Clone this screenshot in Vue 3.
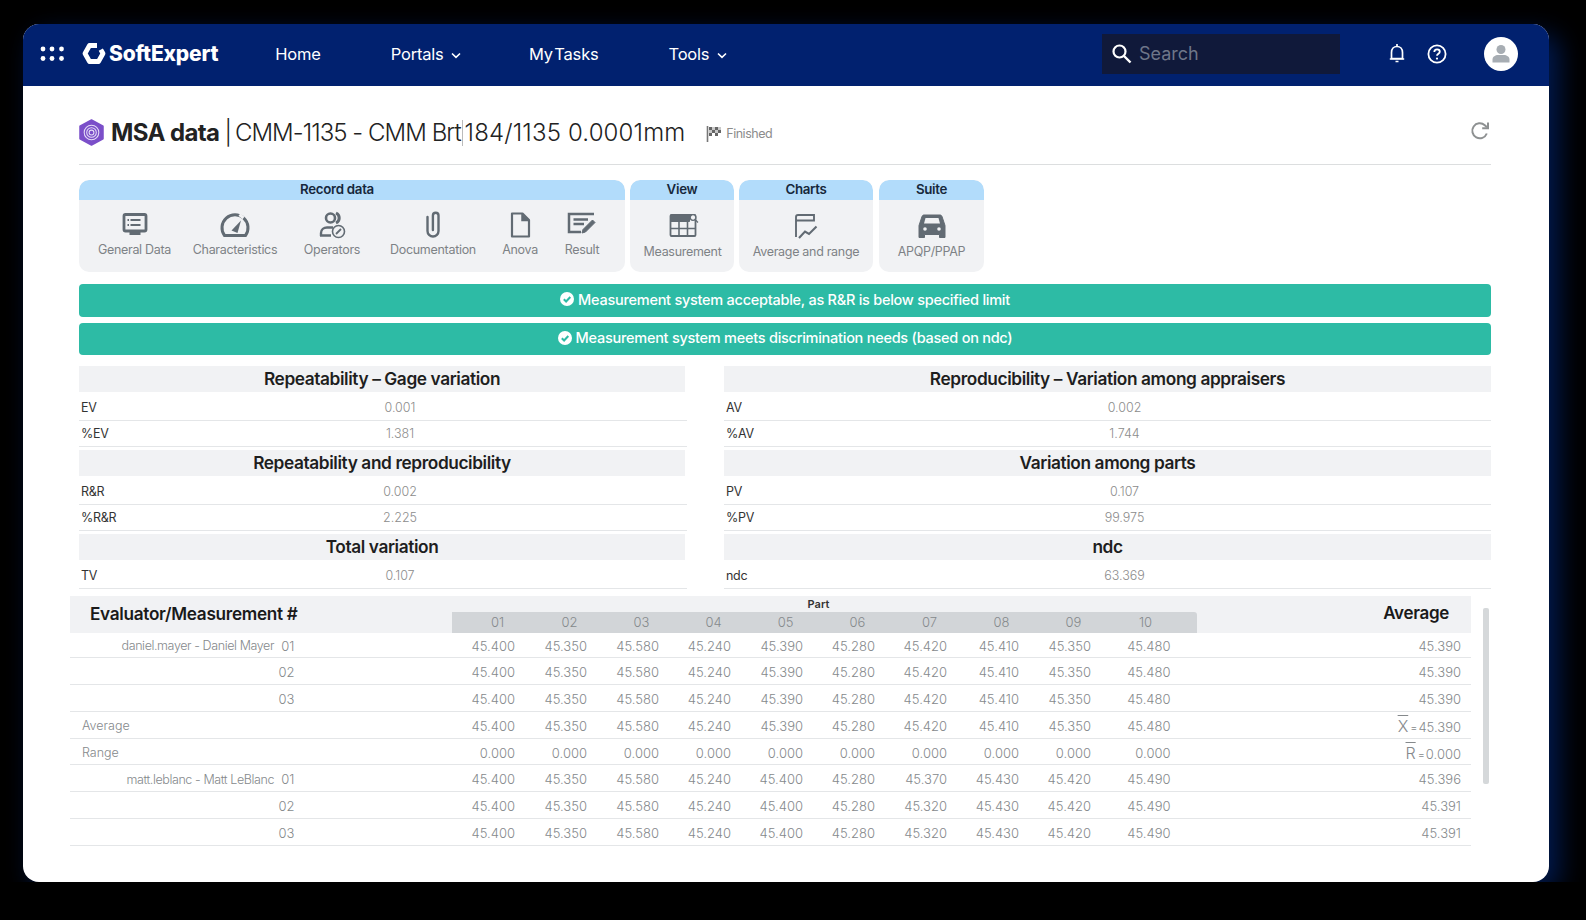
<script setup>
const groups = [
  {
    title: 'Record data',
    cls: 'record',
    items: [
      { label: 'General Data', icon: 'monitor' },
      { label: 'Characteristics', icon: 'gauge' },
      { label: 'Operators', icon: 'users' },
      { label: 'Documentation', icon: 'clip' },
      { label: 'Anova', icon: 'file' },
      { label: 'Result', icon: 'result' },
    ],
  },
  { title: 'View', cls: 'view', items: [{ label: 'Measurement', icon: 'table' }] },
  { title: 'Charts', cls: 'charts', items: [{ label: 'Average and range', icon: 'chart' }] },
  { title: 'Suite', cls: 'suite', items: [{ label: 'APQP/PPAP', icon: 'car' }] },
]

const leftStats = [
  { title: 'Repeatability – Gage variation', rows: [['EV', '0.001'], ['%EV', '1.381']] },
  { title: 'Repeatability and reproducibility', rows: [['R&R', '0.002'], ['%R&R', '2.225']] },
  { title: 'Total variation', rows: [['TV', '0.107']] },
]
const rightStats = [
  { title: 'Reproducibility – Variation among appraisers', rows: [['AV', '0.002'], ['%AV', '1.744']] },
  { title: 'Variation among parts', rows: [['PV', '0.107'], ['%PV', '99.975']] },
  { title: 'ndc', rows: [['ndc', '63.369']] },
]

const parts = ['01', '02', '03', '04', '05', '06', '07', '08', '09', '10']
const danielVals = ['45.400', '45.350', '45.580', '45.240', '45.390', '45.280', '45.420', '45.410', '45.350', '45.480']
const zeroVals = parts.map(() => '0.000')
const mattA = ['45.400', '45.350', '45.580', '45.240', '45.400', '45.280', '45.370', '45.430', '45.420', '45.490']
const mattB = ['45.400', '45.350', '45.580', '45.240', '45.400', '45.280', '45.320', '45.430', '45.420', '45.490']

const rows = [
  { who: 'daniel.mayer - Daniel Mayer', num: '01', vals: danielVals, avg: '45.390' },
  { who: '', num: '02', vals: danielVals, avg: '45.390' },
  { who: '', num: '03', vals: danielVals, avg: '45.390' },
  { label: 'Average', vals: danielVals, avg: '45.390', sym: 'X' },
  { label: 'Range', vals: zeroVals, avg: '0.000', sym: 'R' },
  { who: 'matt.leblanc - Matt LeBlanc', num: '01', vals: mattA, avg: '45.396' },
  { who: '', num: '02', vals: mattB, avg: '45.391' },
  { who: '', num: '03', vals: mattB, avg: '45.391' },
]
</script>

<template>
  <div class="window">
    <header class="topbar">
      <svg class="apps" width="24" height="15" viewBox="0 0 24 15" fill="#fff">
        <circle cx="3" cy="3" r="2.4" /><circle cx="12" cy="3" r="2.4" /><circle cx="21.5" cy="3" r="2.4" />
        <circle cx="3" cy="12.5" r="2.4" /><circle cx="12" cy="12.5" r="2.4" /><circle cx="21.5" cy="12.5" r="2.4" />
      </svg>
      <div class="brand">
        <svg width="24" height="23" viewBox="0 0 24 23">
          <path d="M15 3.500H7.500L3 11.500 7.500 19.500H16.500L21 11.500 18.800 7.600" fill="none" stroke="#fff" stroke-width="4.800" stroke-linejoin="round" />
        </svg>
        <span>SoftExpert</span>
      </div>
      <nav class="nav">
        <a class="home">Home</a>
        <a class="portals">Portals
          <svg width="10" height="7" viewBox="0 0 10 7"><path d="M1 1.500 5 5.300 9 1.500" fill="none" stroke="#fff" stroke-width="1.600" /></svg>
        </a>
        <a class="tasks">My Tasks</a>
        <a class="tools">Tools
          <svg width="10" height="7" viewBox="0 0 10 7"><path d="M1 1.500 5 5.300 9 1.500" fill="none" stroke="#fff" stroke-width="1.600" /></svg>
        </a>
      </nav>
      <div class="search">
        <svg width="21" height="21" viewBox="0 0 21 21"><circle cx="8.500" cy="8.500" r="6" fill="none" stroke="#fff" stroke-width="2.200" /><path d="m13 13 6.500 6.500" stroke="#fff" stroke-width="2.400" /></svg>
        <span>Search</span>
      </div>
      <svg class="bell" width="18" height="21" viewBox="0 0 18 21" fill="none" stroke="#fff" stroke-width="1.700">
        <path d="M3.500 15.500V9.500C3.500 6 5.800 3.500 9 3.500s5.500 2.500 5.500 6v6z" /><path d="M1.800 16h14.400M9 1v2.500M7.500 18.500h3" />
      </svg>
      <svg class="help" width="20" height="20" viewBox="0 0 20 20" fill="none" stroke="#fff" stroke-width="1.800">
        <circle cx="10" cy="10" r="8.600" /><path d="M7.300 8c0-1.700 1.200-2.700 2.800-2.700s2.700 1 2.700 2.400c0 2-2.800 2.100-2.800 4.100" />
        <circle cx="10" cy="14.600" r="1.100" fill="#fff" stroke="none" />
      </svg>
      <div class="avatar">
        <svg width="20" height="19" viewBox="0 0 20 19" fill="#a7adb3"><circle cx="10" cy="5.500" r="4.500" /><path d="M1.500 18.500v-3c0-3 3-4.500 5.500-4.500h6c2.500 0 5.500 1.500 5.500 4.500v3z" /></svg>
      </div>
    </header>

    <main class="content">
      <div class="title-row">
        <svg class="title-icon" width="25" height="27" viewBox="0 0 26 28">
          <path d="M13 1 25 7.500v13L13 27 1 20.500v-13z" fill="#7b4fc9" stroke="#7b4fc9" stroke-width="1.500" stroke-linejoin="round" />
          <g fill="none" stroke="#e5dcf6" stroke-width="1.100"><circle cx="13" cy="14" r="7.600" /><circle cx="13" cy="14" r="5" /><circle cx="13" cy="14" r="2.500" /></g>
        </svg>
        <h1><b>MSA data</b><span class="bar">|</span><span class="code">CMM-1135 - CMM Brt</span><i class="caret"></i><span class="spec">184/1135 0.0001mm</span></h1>
        <span class="status">
          <svg width="16" height="18" viewBox="0 0 16 18">
            <path d="M1.500 1v16" stroke="#777" stroke-width="1.600" />
            <path d="M3 2h3v3H3zM9 2h3v3H9zM6 5h3v3H6zM12 5h3v3h-3zM3 8h3v3H3zM9 8h3v3H9z" fill="#666" />
            <path d="M6 2h3v3H6zM12 2h3v3h-3zM3 5h3v3H3zM9 5h3v3H9z" fill="#c9c9c9" />
          </svg>
          Finished
        </span>
        <svg class="refresh" width="20" height="20" viewBox="0 0 20 20" fill="none" stroke="#8e9192" stroke-width="2">
          <path d="M16.800 12.500A7.500 7.500 0 1 1 14.800 4.200L17 6.300" /><path d="M18 1.500v5.800h-5.800" />
        </svg>
      </div>

      <section class="toolbar">
        <div v-for="g in groups" :key="g.title" class="group" :class="g.cls">
          <div class="group-head">{{ g.title }}</div>
          <div class="group-body">
            <div v-for="it in g.items" :key="it.label" class="tool">
              <svg width="30" height="28" viewBox="0 0 30 28" fill="none" stroke="#626b73" stroke-width="2.200">
                <template v-if="it.icon === 'monitor'">
                  <rect x="4" y="3.500" width="22" height="16.500" rx="1.500" stroke-width="2.800" />
                  <path d="M10.500 9h10M10.500 14h10M7.500 9h1.500M7.500 14h1.500" stroke-width="1.800" />
                  <path d="M9.500 22.500h11" stroke-width="3" />
                </template>
                <template v-else-if="it.icon === 'gauge'">
                  <path d="M4.500 24.500h21a13 13 0 1 0-21 0z" stroke-width="3" stroke-linejoin="round" />
                  <path d="M19.500 3.500l4 3.500" stroke="#f1f2f4" stroke-width="3" />
                  <path d="m11.500 19.500 9.500-10-3.500 12.500z" fill="#626b73" stroke="none" />
                </template>
                <template v-else-if="it.icon === 'users'">
                  <circle cx="13.500" cy="7" r="4.500" stroke-width="2.600" />
                  <path d="M19 2a5.500 5.500 0 0 1 0 10" stroke-width="3" />
                  <path d="M4 25v-3c0-3.500 3-5.500 6-5.500h6" stroke-width="2.400" />
                  <path d="M3 24.500h11" stroke-width="2.400" />
                  <circle cx="21.500" cy="20.500" r="6" stroke-width="1.600" />
                  <path d="m19 23 5-5" stroke-width="1.800" />
                </template>
                <template v-else-if="it.icon === 'clip'">
                  <path d="M9.500 6v14a5.500 5.500 0 0 0 11 0V4.500a2.800 2.800 0 0 0-5.600 0V19" stroke-width="2.400" stroke-linecap="round" />
                </template>
                <template v-else-if="it.icon === 'file'">
                  <path d="M7 2.500h10.500L24 9v16.500H7z" stroke-linejoin="round" />
                  <path d="M17 3v6.500h7" fill="#626b73" stroke-width="1.500" />
                </template>
                <template v-else-if="it.icon === 'result'">
                  <path d="M27 3H2v18h12" stroke-width="2.500" />
                  <path d="M6.500 8.500H21M6.500 13H17" stroke-width="2.500" />
                  <path d="m15 22 1-3.500 9.500-9.500 2.500 2.500-9.500 9.500z" fill="#626b73" stroke-width="1" />
                </template>
                <template v-else-if="it.icon === 'table'">
                  <rect x="1.500" y="3" width="25" height="21" rx="1" stroke-width="1.800" />
                  <path d="M1.500 3h19v6.500h-19z" fill="#626b73" stroke-width="1" />
                  <path d="M1.500 16.500h25M10 9v15M18.500 9v15" stroke-width="1.600" />
                  <circle cx="24" cy="5.500" r="2.800" fill="#f1f2f4" stroke-width="1.300" />
                  <path d="m26 7.500 3 3" stroke-width="1.300" />
                </template>
                <template v-else-if="it.icon === 'chart'">
                  <path d="M5 25V5a2 2 0 0 1 2-2h16v5.500H5" stroke-width="1.900" />
                  <path d="m8 26 6-6.500 4 2.500 7.500-7.500" stroke-width="2.100" />
                </template>
                <template v-else>
                  <path d="M2 13.500 5 4.500c.4-1 1-1.500 2-1.500h16c1 0 1.600.5 2 1.500l3 9v12h-5.500v-3h-15v3H2z" fill="#626b73" stroke-width="1" />
                  <path d="M7 11.500 8.500 6h13l1.500 5.500z" fill="#f1f2f4" stroke="none" />
                  <circle cx="8" cy="17" r="1.800" fill="#f1f2f4" stroke="none" /><circle cx="22" cy="17" r="1.800" fill="#f1f2f4" stroke="none" />
                </template>
              </svg>
              <span>{{ it.label }}</span>
            </div>
          </div>
        </div>
      </section>

      <div class="banner first">
        <svg width="14" height="14" viewBox="0 0 14 14"><circle cx="7" cy="7" r="7" fill="#fff" /><path d="m3.800 7.200 2.300 2.300 4.200-4.500" fill="none" stroke="#2dbba5" stroke-width="2" /></svg>
        Measurement system acceptable, as R&amp;R is below specified limit
      </div>
      <div class="banner second">
        <svg width="14" height="14" viewBox="0 0 14 14"><circle cx="7" cy="7" r="7" fill="#fff" /><path d="m3.800 7.200 2.300 2.300 4.200-4.500" fill="none" stroke="#2dbba5" stroke-width="2" /></svg>
        Measurement system meets discrimination needs (based on ndc)
      </div>

      <section class="stats">
        <div class="stat-col left">
          <div v-for="s in leftStats" :key="s.title" class="stat-block">
            <h3>{{ s.title }}</h3>
            <div v-for="r in s.rows" :key="r[0]" class="stat-row"><span class="k">{{ r[0] }}</span><span class="v">{{ r[1] }}</span></div>
          </div>
        </div>
        <div class="stat-col right">
          <div v-for="s in rightStats" :key="s.title" class="stat-block">
            <h3>{{ s.title }}</h3>
            <div v-for="r in s.rows" :key="r[0]" class="stat-row"><span class="k">{{ r[0] }}</span><span class="v">{{ r[1] }}</span></div>
          </div>
        </div>
      </section>

      <section class="grid-wrap">
        <div class="data">
          <div class="data-head">
            <div class="dh-title">Evaluator/Measurement #</div>
            <div class="dh-parts">
              <div class="dh-part">Part</div>
              <div class="dh-band"><span v-for="p in parts" :key="p">{{ p }}</span></div>
            </div>
            <div class="dh-avg">Average</div>
          </div>
          <div v-for="(r, i) in rows" :key="i" class="data-row">
            <div class="who-cell">
              <template v-if="r.label"><span class="row-label">{{ r.label }}</span></template>
              <template v-else><span class="who">{{ r.who }}</span><span class="num">{{ r.num }}</span></template>
            </div>
            <span v-for="(v, j) in r.vals" :key="j" class="val">{{ v }}</span>
            <div class="avg">
              <template v-if="r.sym"><span class="sym">{{ r.sym }}</span><span class="eq">=</span></template>{{ r.avg }}
            </div>
          </div>
        </div>
        <div class="scrollbar"></div>
      </section>
    </main>
  </div>
</template>

<style>
html, body { margin: 0; background: #000; }
</style>

<style scoped>
.window {
  width: 1526px;
  height: 858px;
  margin: 24px 0 0 23px;
  background: #fff;
  border-radius: 16px;
  overflow: hidden;
  box-shadow: 10px 10px 26px #001a50;
  font-family: Inter, "Liberation Sans", sans-serif;
  color: #222;
  display: flex;
  flex-direction: column;
}
.topbar {
  height: 62px;
  flex: none;
  box-sizing: border-box;
  background: #01216f;
  display: flex;
  align-items: center;
  color: #fff;
  padding: 0 0 3px 17px;
}
.brand {
  display: flex;
  align-items: center;
  gap: 3px;
  margin-left: 18px;
  font-size: 21px;
  font-weight: 800;
  letter-spacing: -0.2px;
}
.nav {
  display: flex;
  align-items: center;
  margin-left: 57px;
  font-size: 16.500px;
  letter-spacing: -0.2px;
}
.nav a svg { margin-left: 3px; vertical-align: 1px; }
.portals { margin-left: 70px; }
.tasks { margin-left: 68px; word-spacing: -3px; }
.tools { margin-left: 70px; }
.search {
  margin-left: auto;
  width: 238px;
  height: 40px;
  background: #10193a;
  display: flex;
  align-items: center;
  gap: 7px;
  padding-left: 9px;
  box-sizing: border-box;
  font-size: 18px;
  color: #6e7689;
}
.bell { margin-left: 48px; }
.help { margin-left: 21px; }
.avatar {
  width: 34px;
  height: 34px;
  border-radius: 50%;
  background: #fff;
  margin-left: 37px;
  margin-right: 31px;
  display: flex;
  align-items: center;
  justify-content: center;
}

.content { padding: 0 58px 0 56px; }
.title-row {
  height: 79px;
  box-sizing: border-box;
  border-bottom: 1px solid #dcdedf;
  display: flex;
  align-items: center;
  padding-top: 14px;
}
.title-icon { flex: none; }
h1 {
  margin: 0 0 0 7px;
  font-size: 24px;
  font-weight: 300;
  white-space: nowrap;
  color: #222;
}
h1 b { font-weight: 700; letter-spacing: -0.6px; }
.bar { margin: 0 3px 0 5px; }
.code { letter-spacing: -0.95px; }
.spec { letter-spacing: 0.15px; }
.caret {
  display: inline-block;
  width: 1px;
  height: 26px;
  background: #bbb;
  vertical-align: -5px;
  margin: 0 1.500px;
}
.status {
  display: flex;
  align-items: center;
  gap: 4px;
  margin: 3px 0 0 21px;
  font-size: 12.500px;
  color: #8c8c8c;
  letter-spacing: -0.5px;
}
.refresh { margin-left: auto; margin-bottom: 2px; margin-right: 1px; }

.toolbar { display: flex; gap: 5px; margin-top: 15px; }
.group {
  height: 92px;
  border-radius: 10px;
  background: #f1f2f4;
  overflow: hidden;
  display: flex;
  flex-direction: column;
}
.group-head {
  height: 20px;
  background: #b2dcfb;
  text-align: center;
  font-size: 13.300px;
  font-weight: 600;
  line-height: 19px;
  color: #16283c;
  letter-spacing: -0.3px;
  border-radius: 10px 10px 0 0;
}
.record .group-head { padding-right: 30px; }
.group-body { display: grid; flex: 1; }
.record { width: 546px; }
.record .group-body { grid-template-columns: 111px 90px 104px 98px 76px 48px; }
.view { width: 104px; }
.view .group-body { padding-left: 1px; }
.view .tool svg { margin-left: 2px; }
.charts { width: 134px; }
.suite { width: 105px; margin-left: 1px; }
.tool {
  display: flex;
  flex-direction: column;
  align-items: center;
  font-size: 12.500px;
  color: #7e8286;
  letter-spacing: -0.3px;
  white-space: nowrap;
  padding-top: 11px;
  gap: 3px;
}
.view .tool, .charts .tool, .suite .tool { padding-top: 12px; gap: 4px; }

.banner {
  background: #2dbba5;
  color: #fff;
  display: flex;
  align-items: center;
  justify-content: center;
  gap: 4px;
  font-size: 14.500px;
  font-weight: 500;
  letter-spacing: -0.26px;
  border-radius: 4px;
  box-sizing: border-box;
  padding-bottom: 2px;
}
.banner.first { height: 33px; margin-top: 11.500px; }
.banner.second { height: 32px; margin-top: 6px; }

.stats { display: flex; margin-top: 11px; }
.stat-col.left { width: 608px; margin-right: 37px; }
.stat-col.right { width: 767px; }
.stat-block + .stat-block { margin-top: 3px; }
h3 {
  margin: 0 0 4px;
  height: 26px;
  line-height: 26px;
  background: #f1f2f4;
  text-align: center;
  font-size: 17.300px;
  font-weight: 600;
  letter-spacing: -0.4px;
  color: #1e1e1e;
}
.left h3 { margin-right: 2px; }
.stat-row {
  display: flex;
  align-items: center;
  height: 25.500px;
  box-sizing: border-box;
  border-bottom: 1.500px solid #e4e6e8;
  font-size: 12.500px;
  padding-left: 2px;
}
.stat-row .k { width: 32px; color: #333; letter-spacing: -0.3px; }
.stat-row .v { flex: 1; text-align: center; color: #8c8c8c; font-weight: 300; }

.grid-wrap { display: flex; margin: 6.500px 0 0 -9px; }
.data { width: 1401px; }
.data-head {
  height: 37px;
  background: #f1f2f4;
  display: flex;
}
.dh-title {
  width: 382px;
  padding: 7px 0 0 20px;
  box-sizing: border-box;
  font-size: 17.200px;
  font-weight: 600;
  letter-spacing: -0.3px;
  color: #1a1a1a;
}
.dh-parts { width: 745px; }
.dh-part {
  height: 16px;
  line-height: 17px;
  font-size: 11px;
  font-weight: 600;
  text-align: center;
  color: #333;
  padding-right: 12px;
}
.dh-band {
  height: 21px;
  background: #d2d5d8;
  border-top-right-radius: 3px;
  display: grid;
  grid-template-columns: repeat(10, 72px);
  padding-left: 9.500px;
  font-size: 13px;
  font-weight: 300;
  line-height: 21px;
  color: #85898c;
  text-align: center;
}
.dh-avg {
  flex: 1;
  text-align: right;
  padding: 7px 22px 0 0;
  font-size: 17px;
  font-weight: 600;
  letter-spacing: -0.3px;
  color: #1a1a1a;
}
.data-row {
  height: 26.860px;
  box-sizing: border-box;
  border-bottom: 1.500px solid #e4e6e8;
  display: flex;
  align-items: center;
  padding-top: 2px;
  font-size: 13px;
  font-weight: 300;
  color: #85898c;
}
.data-row:nth-child(2) { height: 25.500px; }
.who-cell { width: 391.500px; display: flex; align-items: center; }
.who { width: 204px; text-align: right; font-size: 12.500px; letter-spacing: -0.4px; white-space: nowrap; }
.num { width: 20.500px; text-align: right; }
.row-label { padding-left: 12px; font-size: 12.500px; }
.val { width: 72px; box-sizing: border-box; text-align: right; padding-right: 18.500px; }
.val:nth-of-type(10) { padding-right: 11px; }
.avg { flex: 1; text-align: right; padding-right: 10px; }
.sym { font-size: 16px; text-decoration: overline; }
.eq { font-size: 11px; margin: 0 1px 0 2px; }
.scrollbar {
  width: 6px;
  height: 176px;
  margin: 12px 0 0 12px;
  background: #d5d8da;
  border-radius: 2px;
}
</style>
